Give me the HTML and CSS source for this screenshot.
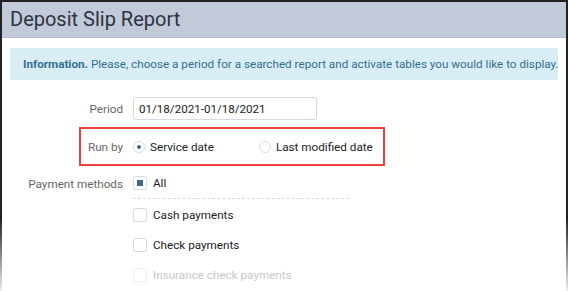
FILE: index.html
```html
<!DOCTYPE html>
<html lang="en">
<head>
    <meta charset="UTF-8">
    <title>Deposit Slip Report</title>
    <link rel="stylesheet" href="styles.css">
</head>
<body>
    <div class="frame">
        <div class="page-header">
            <h1>Deposit Slip Report</h1>
        </div>

        <div class="info">
            <strong>Information.</strong> Please, choose a period for a searched report and activate tables you would like to display.
        </div>

        <div class="form">
            <div class="row">
                <label class="row-label">Period</label>
                <input type="text" class="period" value="01/18/2021-01/18/2021">
            </div>

            <div class="row run-by">
                <label class="row-label">Run by</label>
                <span class="radio checked"></span>
                <span class="opt">Service date</span>
                <span class="radio second"></span>
                <span class="opt">Last modified date</span>
            </div>

            <div class="row">
                <label class="row-label">Payment methods</label>
                <div class="checks">
                    <div class="check-item all">
                        <span class="box filled"></span>
                        <span>All</span>
                    </div>
                    <div class="check-item">
                        <span class="box"></span>
                        <span>Cash payments</span>
                    </div>
                    <div class="check-item">
                        <span class="box"></span>
                        <span>Check payments</span>
                    </div>
                    <div class="check-item disabled">
                        <span class="box"></span>
                        <span>Insurance check payments</span>
                    </div>
                </div>
            </div>
        </div>
    </div>
</body>
</html>
```

FILE: styles.css
```css
html, body {
    margin: 0;
    padding: 0;
    background: #fff;
}

body {
    font-family: Roboto, "Noto Sans", sans-serif;
    color: #333;
    width: 568px;
    height: 291px;
    overflow: hidden;
}

.frame {
    height: 291px;
    box-sizing: border-box;
    border-top: 2px solid #222;
    position: relative;
    background: #fff;
}

/* dark side edges fading out to the bottom */
.frame::before,
.frame::after {
    content: "";
    position: absolute;
    top: -2px;
    bottom: 0;
    width: 2px;
    background: linear-gradient(to bottom, #222 0%, #222 75%, #eee 100%);
}

.frame::before {
    left: 0;
}

.frame::after {
    right: 0;
}

.page-header {
    background: #c2cad9;
    height: 35px;
    border-bottom: 1px solid #b2bccd;
    padding-left: 10px;
}

h1 {
    margin: 0;
    font-weight: 400;
    font-size: 20px;
    line-height: 35px;
    color: #2d3340;
}

.info {
    margin: 10px 10px 0 10px;
    background: #d9edf7;
    color: #31708f;
    font-size: 11.7px;
    height: 32px;
    line-height: 32px;
    padding-left: 13px;
    white-space: nowrap;
}

.form {
    padding-top: 17px;
    font-size: 11.7px;
}

.row {
    display: flex;
    align-items: center;
}

.row-label {
    width: 133px;
    text-align: right;
    padding-right: 10px;
    box-sizing: border-box;
    color: #666;
}

.period {
    width: 184px;
    height: 23px;
    box-sizing: border-box;
    border: 1px solid #d4dde6;
    border-radius: 2px;
    font-family: inherit;
    font-size: 11.6px;
    color: #222;
    padding: 0 5px;
}

.run-by {
    margin: 7px 0 0 79px;
    width: 306px;
    height: 39px;
    box-sizing: border-box;
    border: 2px solid #e8443a;
}

.run-by .row-label {
    width: 42px;
    padding-right: 0;
}

.radio {
    width: 12px;
    height: 12px;
    box-sizing: border-box;
    border-radius: 50%;
    border: 1px solid #d4dde6;
    margin: 0 5px 0 10px;
    position: relative;
}

.radio.checked::after {
    content: "";
    position: absolute;
    left: 3px;
    top: 3px;
    width: 4px;
    height: 4px;
    border-radius: 50%;
    background: #3f6a8a;
}

.radio.second {
    margin-left: 45px;
}

.opt {
    color: #222;
}

.run-by + .row {
    align-items: flex-start;
    margin-top: 9px;
}

.run-by + .row .row-label {
    padding-top: 2px;
}

.checks {
    display: flex;
    flex-direction: column;
}

.check-item {
    display: flex;
    align-items: center;
    height: 16px;
    margin-bottom: 14px;
    color: #222;
}

.check-item.all {
    width: 216px;
    padding-bottom: 7px;
    border-bottom: 1px dashed #d4dde6;
    margin-bottom: 8px;
}

.box {
    width: 14px;
    height: 14px;
    box-sizing: border-box;
    border: 1px solid #d4dde6;
    border-radius: 2px;
    margin-right: 6px;
    position: relative;
}

.box.filled::after {
    content: "";
    position: absolute;
    left: 3px;
    top: 3px;
    width: 6px;
    height: 6px;
    background: #3f6a8a;
}

.check-item.disabled {
    color: #c8c8c8;
}

.check-item.disabled .box {
    border-color: #eef1f4;
}
```
